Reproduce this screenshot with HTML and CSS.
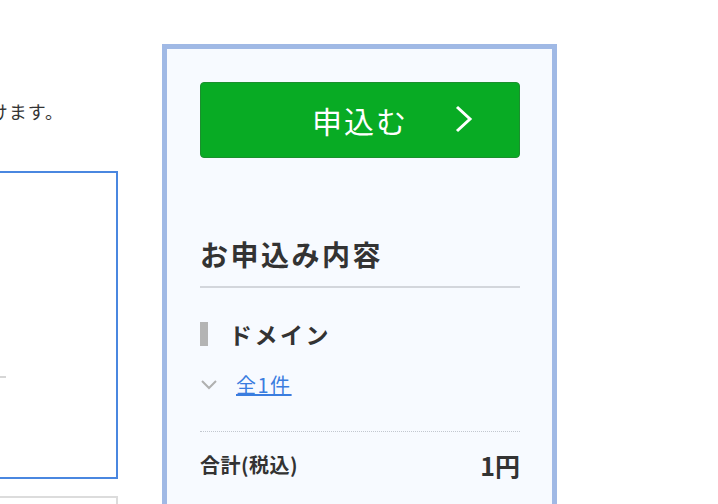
FILE: index.html
```html
<!DOCTYPE html>
<html lang="ja">

<head>
    <meta charset="UTF-8">
    <meta name="viewport" content="width=device-width, initial-scale=1.0">
    <title>お申込み</title>
    <link rel="stylesheet" href="styles.css">
</head>

<body>
    <div class="page">
        <div class="main">
            <p class="notice"><span>お申込みを受け付けます。</span></p>
            <div class="field-box">
                <div class="field-rule"></div>
            </div>
            <div class="field-box next"></div>
        </div>

        <aside class="cart">
            <button class="apply" type="button">
                <span>申込む</span>
                <svg class="apply-arrow" width="18" height="28" viewBox="0 0 18 28">
                    <polyline points="2,2 15,14 2,26" fill="none" stroke="#fff" stroke-width="3" />
                </svg>
            </button>

            <h2 class="cart-title">お申込み内容</h2>

            <div class="item-head">
                <span class="item-bar"></span>
                <span>ドメイン</span>
            </div>
            <div class="item-toggle">
                <svg width="16" height="10" viewBox="0 0 16 10">
                    <polyline points="1,1 8,8 15,1" fill="none" stroke="#b0b0b0" stroke-width="2" />
                </svg>
                <a href="#">全1件</a>
            </div>

            <div class="total">
                <span class="total-label">合計(税込)</span>
                <span class="total-price">1円</span>
            </div>
        </aside>
    </div>
</body>

</html>
```

FILE: styles.css
```css
body {
    margin: 0;
    font-family: "Noto Sans CJK JP", "Noto Sans", sans-serif;
    color: #333;
    background-color: #fff;
    overflow: hidden;
}

.page {
    display: flex;
    align-items: flex-start;
    gap: 44px;
}

.main {
    width: 118px;
    flex-shrink: 0;
    overflow: hidden;
}

.notice {
    width: 64px;
    margin: 0;
    padding-top: 96px;
    display: flex;
    justify-content: flex-end;
    font-size: 18px;
    line-height: 30px;
    letter-spacing: 1px;
    white-space: nowrap;
}

.field-box {
    margin-top: 45px;
    height: 304px;
    border: 2px solid #4a87e0;
    border-left: none;
}

.field-rule {
    margin-top: 203px;
    width: 6px;
    border-top: 2px solid #d6d6d6;
}

.field-box.next {
    margin-top: 17px;
    height: 40px;
    border-color: #dcdcdc;
}

.cart {
    margin-top: 44px;
    width: 320px;
    height: 600px;
    padding: 33px 32px 0 33px;
    border: 5px solid #a0b9e5;
    background: #f7faff;
}

.apply {
    position: relative;
    width: 320px;
    height: 76px;
    display: flex;
    align-items: center;
    justify-content: center;
    border: 1px solid #1b8f2e;
    border-radius: 4px;
    background: #08ab24;
    color: #fff;
    font-family: inherit;
    font-size: 30px;
    letter-spacing: 2px;
    cursor: pointer;
}

.apply-arrow {
    position: absolute;
    right: 46px;
    top: 22px;
}

.cart-title {
    margin: 76px 0 0;
    padding-bottom: 12px;
    border-bottom: 2px solid #d3d6dc;
    font-size: 28px;
    line-height: 40px;
    letter-spacing: 2.5px;
}

.item-head {
    margin-top: 34px;
    display: flex;
    align-items: center;
    gap: 21px;
    font-size: 23px;
    font-weight: bold;
    line-height: 24px;
    letter-spacing: 2.5px;
}

.item-bar {
    width: 8px;
    height: 24px;
    background: #b4b4b4;
}

.item-toggle {
    margin-top: 25px;
    display: flex;
    align-items: center;
    gap: 19px;
    padding-left: 1px;
    padding-bottom: 32px;
    border-bottom: 1px dotted #c2c7cf;
    line-height: 28px;
}

.item-toggle a {
    color: #3a7ddf;
    font-size: 20px;
    letter-spacing: 1.5px;
}

.total {
    padding-top: 16px;
    display: flex;
    align-items: center;
    justify-content: space-between;
    line-height: 34px;
    font-weight: bold;
}

.total-label {
    font-size: 20px;
    letter-spacing: 0.5px;
}

.total-price {
    font-size: 25px;
}
```
